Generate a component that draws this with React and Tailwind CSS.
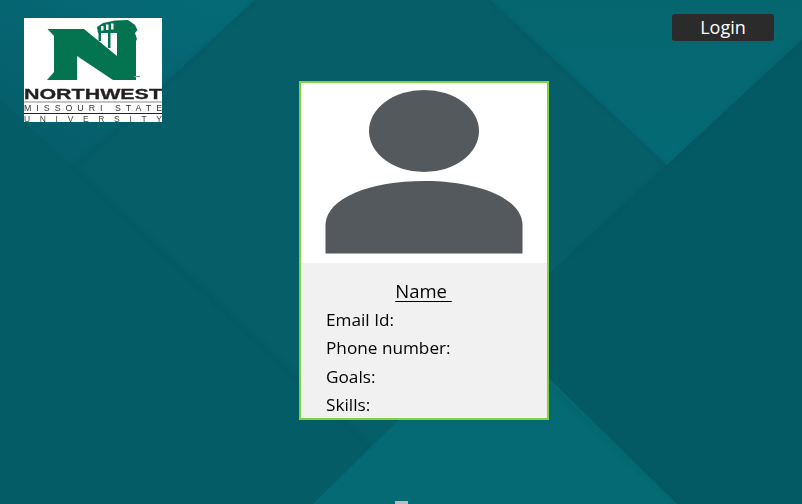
import React from "react";

const font = { fontFamily: '"Open Sans", sans-serif' };

function Background() {
  return (
    <svg className="absolute inset-0" width="802" height="504" viewBox="0 0 802 504">
      <defs>
        <linearGradient id="tl" x1="0.7" y1="0" x2="0.1" y2="1">
          <stop offset="0" stopColor="#056a76" />
          <stop offset="1" stopColor="#055c69" />
        </linearGradient>
        <linearGradient id="tr" x1="0.5" y1="0" x2="0.5" y2="1">
          <stop offset="0" stopColor="#05666f" />
          <stop offset="1" stopColor="#056a76" />
        </linearGradient>
        <filter id="soft"><feGaussianBlur stdDeviation="2" /></filter>
      </defs>
      <rect width="802" height="504" fill="#045c66" />
      <polygon points="0,0 255,0 74,168 0,98" fill="url(#tl)" />
      <polygon points="490,0 802,0 802,40 667,165" fill="url(#tr)" />
      <polygon points="74,168 255,0 490,0 667,165 372,448" fill="#065e69" />
      <polygon points="802,40 667,165 520,300 548,385 677,504 802,504" fill="#045a64" />
      <polygon points="313,504 495,325 677,504" fill="#056a73" />
      <g filter="url(#soft)" stroke="#044f5a" strokeWidth="2" fill="none" opacity="0.3">
        <polyline points="255,0 74,168 372,448" />
        <polyline points="490,0 667,165" />
        <polyline points="802,40 667,165 570,255" opacity="0.6" />
        <polyline points="548,385 677,504" opacity="0.7" />
      </g>
    </svg>
  );
}

function Logo() {
  return (
    <div className="w-[138px] h-[104px] mt-[18px] bg-white overflow-hidden shrink-0">
      <svg width="138" height="104" viewBox="24 18 138 104">
        <path
          fill="#04734f"
          d="M47.5 29 H84 L117 56 V33 H98 L97 27 L103 23 L115 20.5 L128 20 L135 25 L137.5 30 L135 33 L137 39 L136 41 V76 V80 H113 L77 56 V80 H47 L54 72 V36 Z"
        />
        <rect x="98.5" y="32" width="2.5" height="9" fill="#04734f" />
        <rect x="108" y="32" width="2.5" height="16" fill="#04734f" />
        <path fill="#ffffff" d="M101 26 H103.5 V30.5 H101 Z M106 24.5 H108.5 V30 H106 Z M111 23.5 H113.5 V29.5 H111 Z" />
        <rect x="134" y="76" width="6" height="1.2" fill="#6a9a88" />
        <text x="24" y="99" textLength="138" lengthAdjust="spacingAndGlyphs" fontSize="15.5" fontWeight="700" stroke="#231f20" strokeWidth="0.3" fill="#231f20" style={{ fontFamily: '"Liberation Sans", sans-serif' }}>NORTHWEST</text>
        <rect x="24" y="101" width="138" height="2" fill="#c4c4c4" />
        <text x="24" y="111" textLength="138" lengthAdjust="spacing" fontSize="8.8" fill="#333" style={{ fontFamily: '"Liberation Sans", sans-serif' }}>MISSOURI STATE</text>
        <rect x="24" y="113" width="138" height="1" fill="#222" />
        <text x="24" y="122" textLength="138" lengthAdjust="spacing" fontSize="8.5" fill="#444" style={{ fontFamily: '"Liberation Sans", sans-serif' }}>UNIVERSITY</text>
      </svg>
    </div>
  );
}

export default function App() {
  return (
    <div className="relative w-[802px] h-[504px] overflow-hidden bg-[#045c66]" style={font}>
      <Background />
      <div className="relative">
        <header className="flex items-start justify-between h-[81px] pl-[24px] pr-[28px]">
          <Logo />
          <button className="mt-[14px] w-[102px] h-[27px] bg-[#2b2b2b] rounded-[3px] text-white text-[18px] leading-[27px] text-center">
            Login
          </button>
        </header>
        <main className="ml-[299px] w-[250px] h-[339px] border-2 border-[#82d13e] bg-[#f1f1f1] text-black">
          <div className="h-[180px] bg-white flex justify-center">
            <svg width="246" height="180" viewBox="301 83 246 180">
              <ellipse cx="424" cy="131" rx="55" ry="41" fill="#54595d" />
              <path d="M325.5 253.5 V224 C327 198 370 181 424 181 C478 181 521 198 522.5 224 V253.5 Z" fill="#54595d" />
            </svg>
          </div>
          <div className="pt-[15px] text-[17.2px]">
            <h2 className="text-center text-[18.5px] leading-[26px] underline underline-offset-[3px] decoration-1 whitespace-pre mr-[1px]">Name </h2>
            <ul className="pl-[25px] mt-[2px]">
              <li className="leading-[28px] h-[28px]">Email Id:</li>
              <li className="leading-[28px] h-[28px]">Phone number:</li>
              <li className="leading-[29px] h-[29px]">Goals:</li>
              <li className="leading-[27px] h-[27px]">Skills:</li>
            </ul>
          </div>
        </main>
      </div>
      <div className="absolute left-[395px] top-[501px] w-[13px] h-[3px] bg-[#b9bcbc]" />
    </div>
  );
}
